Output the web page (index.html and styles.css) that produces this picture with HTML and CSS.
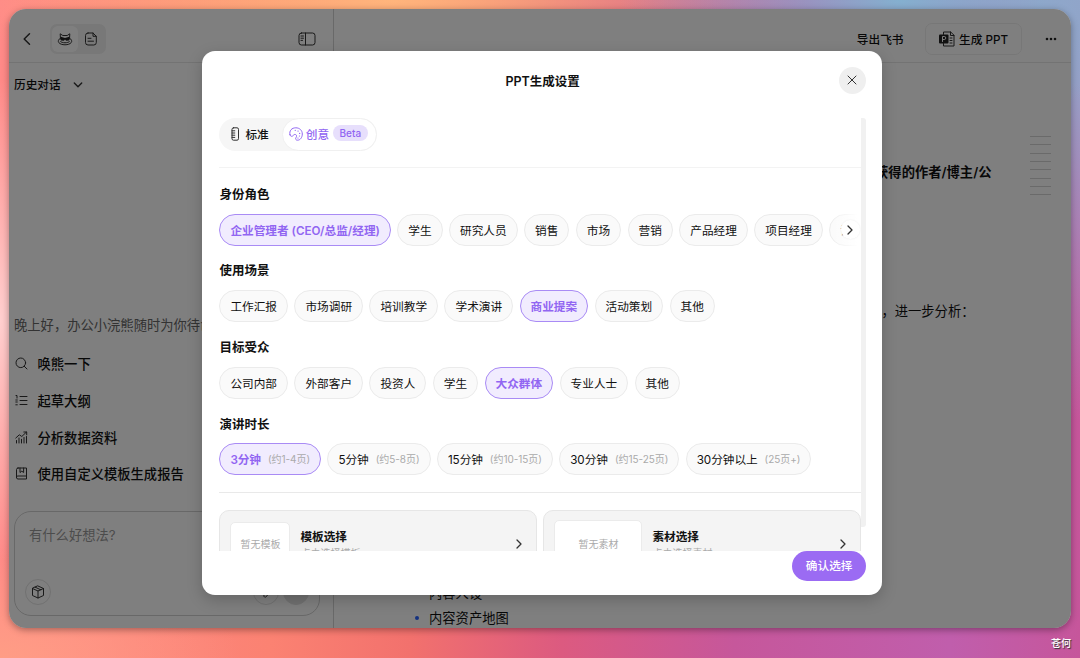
FILE: index.html
```html
<!DOCTYPE html>
<html lang="zh-CN">
<head>
    <meta charset="UTF-8">
    <meta name="viewport" content="width=device-width, initial-scale=1.0">
    <title>PPT生成设置</title>
    <link rel="stylesheet" href="styles.css">
</head>
<body>
    <div class="window">
        <aside class="sidebar">
            <div class="sidebar-header">
                <svg class="back" width="16" height="16" viewBox="0 0 16 16"><path d="M10.5 2.8 5.2 8l5.3 5.2"/></svg>
                <div class="view-switch">
                    <span class="view active">
                        <svg width="16" height="14" viewBox="0 0 16 14"><path d="M3.5 7.2 3.2 1.800l2.600 1.700h4.400l2.600-1.700-.3 5.400M3.500 6C-1.500 9.400 2.500 12.800 8 12.800s9.500-3.400 4.500-6.800M3.500 9.500c1.300 1.800 7.700 1.800 9 0"/><path class="fill" d="M3.800 4.800 8 6l4.200-1.200-.2 3.700-2.800.3L8 7.600l-1.200 1.200-2.800-.3z"/></svg>
                    </span>
                    <span class="view">
                        <svg width="14" height="14" viewBox="0 0 14 14"><path d="M4 1h5l3.300 3.300v6.200a2.500 2.500 0 0 1-2.500 2.500H4a2.500 2.500 0 0 1-2.500-2.500v-7A2.500 2.500 0 0 1 4 1zM9 1v3.300h3.300M4 6.300h3M4 9.200h5.500"/></svg>
                    </span>
                </div>
                <svg class="panel-icon" width="18" height="14" viewBox="0 0 18 14"><rect x="1" y="1" width="16" height="12" rx="2.500"/><path d="M7.500 1v12M3 4h2.500M3 6.200h2.500M3 8.400h1.500"/></svg>
            </div>
            <div class="history">
                <span>历史对话</span>
                <svg width="10" height="10" viewBox="0 0 10 10"><path d="M1.300 3 5 6.800 8.700 3"/></svg>
            </div>
            <p class="greeting">晚上好，办公小浣熊随时为你待命</p>
            <ul class="actions">
                <li>
                    <svg width="13" height="13" viewBox="0 0 13 13"><circle cx="5.800" cy="5.800" r="4.800"/><path d="m9.200 9.200 2.800 2.800"/></svg>
                    唤熊一下
                </li>
                <li>
                    <svg width="13" height="13" viewBox="0 0 13 13"><path d="M5 2.500h7M5 6.500h7M5 10.500h7M1 1.500h1v2.600M.8 6h1.500M.8 8h1.500M.8 10.800h1.500"/></svg>
                    起草大纲
                </li>
                <li>
                    <svg width="13" height="13" viewBox="0 0 13 13"><path d="M.8 7 4.300 3.800l2.500 1.700L11.500 1M8.800 1h2.900v2.800M1.500 9.500V12M4 7v5M6.500 8.300V12M9 6.500V12M11.500 5.500V12"/></svg>
                    分析数据资料
                </li>
                <li>
                    <svg width="13" height="13" viewBox="0 0 13 13"><path d="M3 1h8.500v11H3a1.500 1.500 0 0 1-1.500-1.500v-8A1.500 1.500 0 0 1 3 1zM1.500 10.500C1.500 9.500 2 9 3 9h8.500M5 1v4.500l1.800-1.300 1.800 1.300V1"/></svg>
                    使用自定义模板生成报告
                </li>
            </ul>
            <div class="composer">
                <span class="placeholder">有什么好想法?</span>
                <div class="composer-tools">
                    <span class="tool">
                        <svg width="14" height="14" viewBox="0 0 14 14"><path d="M7 1 12.500 3.500v7L7 13l-5.500-2.500v-7zM1.500 3.500 7 6l5.500-2.500M7 6v7M4.200 2.200l5.600 2.600"/></svg>
                    </span>
                    <span class="tool pen">
                        <svg width="12" height="12" viewBox="0 0 12 12"><path d="m10 5-3.500 5.500c-1 1.300-3.500.5-2.500-1.500L7.500 3"/></svg>
                    </span>
                    <span class="tool send"></span>
                </div>
            </div>
        </aside>
        <main class="document">
            <div class="doc-header">
                <span class="export">导出飞书</span>
                <span class="ppt-button">
                    <svg width="16" height="16" viewBox="0 0 16 16"><path d="M4.500 3.500V1h7.200L15 4.200V15H4.500v-2.500M11.500 1v3.500H15M11 7h2M11 9.500h2M11 12h2"/><rect class="fill" x="0" y="3.500" width="9.500" height="9" rx="1"/><path class="mark" d="M3.500 10.500v-5h1.800a1.500 1.500 0 0 1 0 3H3.500"/></svg>
                    生成 PPT
                </span>
                <svg class="more" width="12" height="4" viewBox="0 0 12 4"><circle cx="2" cy="2" r="1.300"/><circle cx="6" cy="2" r="1.300"/><circle cx="10" cy="2" r="1.300"/></svg>
            </div>
            <div class="doc-body">
                <article class="article">
                    <h2>获得的作者/博主/公</h2>
                    <p>，进一步分析：</p>
                    <ul>
                        <li>内容人设</li>
                        <li>内容资产地图</li>
                    </ul>
                </article>
                <div class="outline">
                    <i></i><i></i><i></i><i></i><i></i><i></i><i></i><i></i>
                </div>
            </div>
        </main>
        <div class="overlay"></div>
    </div>

    <div class="modal">
        <div class="modal-header">
            <h1>PPT生成设置</h1>
            <span class="close">
                <svg width="10" height="10" viewBox="0 0 10 10"><path d="m1 1 8 8M9 1 1 9"/></svg>
            </span>
        </div>
        <div class="modal-scroll">
            <div class="modal-content">
                <div class="mode-tabs">
                    <span class="mode">
                        <svg width="9" height="14" viewBox="0 0 9 14"><rect x="1" y=".8" width="6.500" height="12.400" rx="1.500"/><path d="M1 3.800h2.800M1 6h2.800M1 8.200h2.800M1 10.400h2.800"/></svg>
                        <span class="mode-name">标准</span>
                    </span>
                    <span class="mode active">
                        <svg width="14" height="14" viewBox="0 0 14 14"><path d="M1 7.800C-.2 3.500 3 .8 6.800.8c3.800 0 6.500 2.600 6.500 6.200 0 3.500-2.100 6.200-4.800 6.200-1.800 0-2.300-1.400-1.500-2.600 1-1.500.7-2.700-.6-3.100C4.500 6.900 4.300 9.500 2.500 9.300 1.700 9.200 1.200 8.600 1 7.800z"/><path class="dots" d="M6.200 3.300h.1M9 4.100h.1M10.600 6.400h.1M10.400 9h.1M8.900 11h.1"/></svg>
                        <span class="mode-name">创意</span>
                        <b class="beta">Beta</b>
                    </span>
                </div>

                <section class="group first">
                    <h3>身份角色</h3>
                    <div class="chips roles">
                        <span class="chip selected">企业管理者 (CEO/总监/经理)</span>
                        <span class="chip">学生</span>
                        <span class="chip">研究人员</span>
                        <span class="chip">销售</span>
                        <span class="chip">市场</span>
                        <span class="chip">营销</span>
                        <span class="chip">产品经理</span>
                        <span class="chip">项目经理</span>
                        <span class="chip">设计师</span>
                        <div class="fade">
                            <span class="next">
                                <svg width="8" height="10" viewBox="0 0 8 10"><path d="M2 1l4 4-4 4"/></svg>
                            </span>
                        </div>
                    </div>
                </section>

                <section class="group">
                    <h3>使用场景</h3>
                    <div class="chips">
                        <span class="chip">工作汇报</span>
                        <span class="chip">市场调研</span>
                        <span class="chip">培训教学</span>
                        <span class="chip">学术演讲</span>
                        <span class="chip selected">商业提案</span>
                        <span class="chip">活动策划</span>
                        <span class="chip">其他</span>
                    </div>
                </section>

                <section class="group">
                    <h3>目标受众</h3>
                    <div class="chips">
                        <span class="chip">公司内部</span>
                        <span class="chip">外部客户</span>
                        <span class="chip">投资人</span>
                        <span class="chip">学生</span>
                        <span class="chip selected">大众群体</span>
                        <span class="chip">专业人士</span>
                        <span class="chip">其他</span>
                    </div>
                </section>

                <section class="group">
                    <h3>演讲时长</h3>
                    <div class="chips durations">
                        <span class="chip selected">3分钟 <small>(约1-4页)</small></span>
                        <span class="chip">5分钟 <small>(约5-8页)</small></span>
                        <span class="chip">15分钟 <small>(约10-15页)</small></span>
                        <span class="chip">30分钟 <small>(约15-25页)</small></span>
                        <span class="chip">30分钟以上 <small>(25页+)</small></span>
                    </div>
                </section>

                <div class="cards">
                    <div class="card">
                        <span class="thumb">暂无模板</span>
                        <div class="card-text">
                            <strong>模板选择</strong>
                            <span>点击选择模板</span>
                        </div>
                        <svg width="8" height="10" viewBox="0 0 8 10"><path d="M2 1l4 4-4 4"/></svg>
                    </div>
                    <div class="card">
                        <span class="thumb wide">暂无素材</span>
                        <div class="card-text">
                            <strong>素材选择</strong>
                            <span>点击选择素材</span>
                        </div>
                        <svg width="8" height="10" viewBox="0 0 8 10"><path d="M2 1l4 4-4 4"/></svg>
                    </div>
                </div>
            </div>
            <div class="scrollbar"></div>
        </div>
        <div class="modal-footer">
            <span class="confirm">确认选择</span>
        </div>
    </div>

    <span class="watermark">苍何</span>
</body>
</html>
```
FILE: styles.css
```css
* {
    box-sizing: border-box;
}
body {
    margin: 0;
    padding: 9px 9px 30px;
    height: 658px;
    overflow: hidden;
    position: relative;
    font-family: Inter, "Noto Sans CJK SC", sans-serif;
    font-size: 11.67px;
    color: #111;
    background:
        radial-gradient(ellipse 280px 130px at 900px 0, #84b0cf, rgba(132, 176, 207, 0)),
        radial-gradient(ellipse 420px 110px at 390px 0, #ffb57c, rgba(255, 181, 124, 0)),
        radial-gradient(ellipse 200px 420px at 1080px 0, #979fc6 20%, rgba(190, 130, 175, 0)),
        radial-gradient(ellipse 120px 240px at 0 320px, #ffcfcf, rgba(255, 207, 207, 0)),
        radial-gradient(ellipse 240px 110px at 0 658px, #ff9d85, rgba(255, 157, 133, 0)),
        linear-gradient(to right, #ff8a88 0%, #fb8272 25%, #f2716d 38%, #dc5a80 52%, #c6579b 68%, #c05eac 88%, #c6569b 100%);
}
svg {
    display: block;
    flex: none;
    fill: none;
    stroke: #333;
    stroke-width: 1;
    stroke-linecap: round;
    stroke-linejoin: round;
}
svg .fill {
    fill: #222;
    stroke: none;
}
h1, h2, h3, p, ul {
    margin: 0;
    padding: 0;
}
ul {
    list-style: none;
}

/* app window */
.window {
    position: relative;
    display: flex;
    height: 619px;
    border-radius: 17px;
    overflow: hidden;
    background: #fff;
    box-shadow: 0 2px 7px rgba(0, 0, 0, 0.35);
}
.overlay {
    position: absolute;
    inset: 0;
    background: rgba(0, 0, 0, 0.5);
}
.sidebar {
    width: 325px;
    border-right: 1px solid #d2d2d2;
    display: flex;
    flex-direction: column;
}
.sidebar-header {
    height: 54px;
    flex: none;
    padding: 6px 17px 0 10px;
    border-bottom: 1px solid #e6e6e6;
    display: flex;
    align-items: center;
}
.back {
    stroke-width: 1.5;
}
.view-switch {
    display: flex;
    margin-left: 14.5px;
    padding: 2px;
    background: #f0f0f0;
    border-radius: 7px;
}
.view {
    width: 26px;
    height: 26px;
    display: flex;
    align-items: center;
    justify-content: center;
    border-radius: 6px;
}
.view.active {
    background: #fff;
}
.panel-icon {
    margin-left: auto;
    margin-top: 1px;
}
.history {
    display: flex;
    align-items: center;
    gap: 12px;
    margin: 13px 0 0 5px;
    height: 18px;
    line-height: 18px;
    font-weight: 500;
}
.history svg {
    stroke-width: 1.4;
}
.greeting {
    margin: 220.5px 0 0 5px;
    font-size: 13.3px;
    line-height: 20px;
    color: #666;
    white-space: nowrap;
}
.actions {
    margin: 11px 0 0 6px;
}
.actions li {
    display: flex;
    align-items: center;
    gap: 9.5px;
    height: 36.7px;
    font-size: 13.3px;
    font-weight: 500;
}
.composer {
    margin: 18.5px 13px 0 5px;
    height: 105px;
    border: 1px solid #d0d0d0;
    border-radius: 17px;
    padding: 13px 10px 10px;
    display: flex;
    flex-direction: column;
    justify-content: space-between;
}
.placeholder {
    margin-left: 4px;
    font-size: 13.3px;
    line-height: 20px;
    color: #999;
}
.composer-tools {
    display: flex;
    gap: 4px;
}
.tool {
    width: 26px;
    height: 26px;
    border: 1px solid #e2e2e2;
    border-radius: 50%;
    display: flex;
    align-items: center;
    justify-content: center;
}
.tool.pen {
    margin-left: auto;
}
.tool.send {
    background: #e2e2e2;
}

/* document side */
.document {
    flex: 1;
    display: flex;
    flex-direction: column;
}
.doc-header {
    height: 54px;
    flex: none;
    padding: 6px 14px 0 0;
    border-bottom: 1px solid #e6e6e6;
    display: flex;
    align-items: center;
    justify-content: flex-end;
    font-weight: 500;
}
.ppt-button {
    margin: 0 23px 0 21.5px;
    width: 97px;
    height: 32px;
    border: 1px solid #efefef;
    border-radius: 7px;
    display: flex;
    align-items: center;
    justify-content: center;
    gap: 4px;
    white-space: nowrap;
}
.ppt-button .mark {
    stroke: #fff;
}
.more {
    fill: #222;
    stroke: none;
}
.doc-body {
    flex: 1;
    display: flex;
    padding-right: 20px;
}
.article {
    flex: 1;
    padding: 99px 38.5px 0 81px;
    font-size: 13.3px;
    line-height: 20px;
}
.article h2 {
    font-size: 13.3px;
    font-weight: 600;
    text-align: right;
}
.article p {
    margin: 119px 17px 0 0;
    text-align: right;
}
.article ul {
    margin-top: 259px;
}
.article li {
    display: flex;
    align-items: center;
    gap: 10px;
    height: 25px;
}
.article li::before {
    content: "";
    width: 4px;
    height: 4px;
    border-radius: 50%;
    background: #2962ff;
}
.outline {
    width: 21px;
    padding-top: 73px;
    display: flex;
    flex-direction: column;
    gap: 7.33px;
}
.outline i {
    height: 1px;
    background: #d4d4d4;
}

/* settings modal */
.modal {
    position: absolute;
    left: 202.4px;
    top: 51px;
    width: 680px;
    height: 543.5px;
    padding: 0 16.5px 13.5px 17px;
    background: #fff;
    border-radius: 13px;
    box-shadow: 0 5px 16px rgba(0, 0, 0, 0.2);
    display: flex;
    flex-direction: column;
}
.modal-header {
    height: 66.5px;
    display: grid;
    grid-template-columns: 27px 1fr 27px;
    padding-bottom: 8px;
    align-items: center;
}
.modal-header h1 {
    grid-column: 2;
    font-size: 12.5px;
    font-weight: 600;
    text-align: center;
}
.close {
    width: 27px;
    height: 27px;
    border-radius: 50%;
    background: #efefef;
    display: flex;
    align-items: center;
    justify-content: center;
}
.modal-scroll {
    height: 433.5px;
    flex: none;
    overflow: hidden;
    display: flex;
    align-items: flex-start;
}
.modal-content {
    width: 641.5px;
    flex: none;
}
.scrollbar {
    width: 5px;
    height: 409px;
    border-radius: 0 3px 3px 0;
    background: #f1f1f1;
}
.mode-tabs {
    display: inline-flex;
    vertical-align: top;
    height: 33px;
    border-radius: 17px;
    background: #f6f6f6;
}
.mode {
    display: flex;
    align-items: center;
    gap: 5px;
    padding: 0 13px 0 12px;
    font-weight: 500;
}
.mode-name {
    margin-top: -2px;
}
.mode.active {
    gap: 3px;
    padding: 0 8.5px 0 6px;
    color: #9166f2;
    background: #fff;
    border: 1px solid #f0f0f0;
    border-radius: 17px;
}
.mode.active svg {
    stroke: #9166f2;
}
.mode .dots {
    stroke-width: 1.2;
}
.beta {
    margin: -2px 0 0 1px;
    padding: 0 6.5px;
    height: 16px;
    line-height: 16px;
    border-radius: 8px;
    background: #e7dffc;
    font-size: 10px;
    font-weight: 500;
}
.group {
    height: 76.75px;
}
.group.first {
    margin-top: 16.5px;
    border-top: 1.5px solid #f3f3f3;
    height: 95.25px;
    padding-top: 18px;
}
.group h3 {
    font-size: 12.5px;
    line-height: 18px;
    font-weight: 600;
}
.chips {
    display: flex;
    gap: 6.4px;
    margin-top: 9.5px;
}
.roles {
    position: relative;
    overflow: hidden;
}
.chip {
    flex: none;
    height: 32px;
    padding: 0 10px 1px;
    border: 1px solid #ebebeb;
    border-radius: 16px;
    background: #fafafa;
    display: flex;
    align-items: center;
    font-weight: 400;
    white-space: nowrap;
}
.chip.selected {
    border-color: #a98bf5;
    background: #f1ecfe;
    color: #9166f2;
    font-weight: 600;
}
.chip small {
    margin-left: 7px;
    font-size: 10px;
    font-weight: 400;
    color: #aaa;
}
.durations .chip {
    letter-spacing: -0.05px;
}
.fade {
    position: absolute;
    right: 0;
    top: 0;
    width: 34px;
    height: 32px;
    display: flex;
    align-items: center;
    justify-content: flex-end;
    padding-right: 1px;
    background: linear-gradient(to right, rgba(255, 255, 255, 0), #fff 90%);
}
.next {
    width: 19px;
    height: 19px;
    border-radius: 50%;
    background: #fff;
    box-shadow: 0 0 2px rgba(0, 0, 0, 0.08);
    display: flex;
    align-items: center;
    justify-content: center;
}
.next svg, .card svg {
    stroke-width: 1.3;
}
.cards {
    display: flex;
    gap: 6.5px;
    margin-top: -0.5px;
    padding-top: 17px;
    border-top: 1px solid #e9e9e9;
}
.card {
    flex: 1;
    height: 68px;
    padding: 0 13px 0 10px;
    border: 1px solid #e6e6e6;
    border-radius: 10px;
    background: #f4f4f4;
    display: flex;
    align-items: center;
}
.thumb {
    width: 60px;
    height: 44px;
    border: 1px solid #ebebeb;
    border-radius: 5px;
    background: #fff;
    display: flex;
    align-items: center;
    justify-content: center;
    padding-bottom: 1px;
    font-size: 10px;
    color: #aaa;
}
.thumb.wide {
    width: 88px;
    height: 48px;
}
.card-text {
    flex: 1;
    margin: 2px 0 0 10px;
    display: flex;
    flex-direction: column;
}
.card-text strong {
    font-weight: 600;
    line-height: 17px;
}
.card-text span {
    font-size: 10px;
    line-height: 15px;
    color: #aaa;
}
.modal-footer {
    display: flex;
    justify-content: flex-end;
}
.confirm {
    width: 73.5px;
    height: 30px;
    line-height: 30px;
    border-radius: 15px;
    background: #9b6bf3;
    color: #fff;
    font-weight: 500;
    text-align: center;
}
.watermark {
    position: absolute;
    right: 9px;
    bottom: 7px;
    font-size: 10px;
    line-height: 15px;
    font-weight: 500;
    color: #fff;
    text-shadow: 1px 1px 1px #333;
}
```
